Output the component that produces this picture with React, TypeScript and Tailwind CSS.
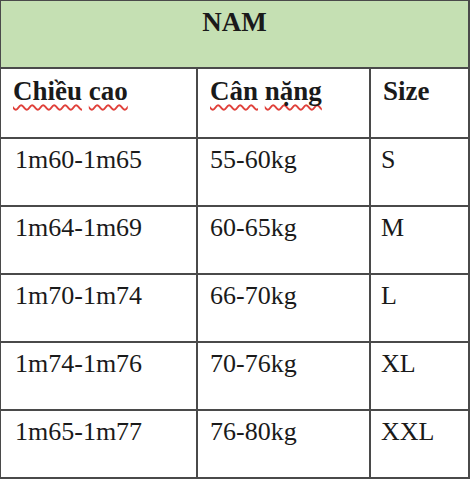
const rows = [
  ['1m60-1m65', '55-60kg', 'S'],
  ['1m64-1m69', '60-65kg', 'M'],
  ['1m70-1m74', '66-70kg', 'L'],
  ['1m74-1m76', '70-76kg', 'XL'],
  ['1m65-1m77', '76-80kg', 'XXL'],
];

const serif = { fontFamily: '"Liberation Serif", "Times New Roman", serif' };

// Word's spell-check squiggle under each flagged word
function Squiggle({ children }: { children: string }) {
  return (
    <span className="underline decoration-wavy decoration-[#e0403a] decoration-[1.5px] underline-offset-[4px] [text-decoration-skip-ink:none]">
      {children}
    </span>
  );
}

export default function App() {
  return (
    <div className="h-[480px] w-[471px] overflow-hidden bg-white text-[#1a1a1a]" style={serif}>
      <div className="w-[470px] border-2 border-t-[1px] border-l-[1px] border-[#4a4a4a]">
        {/* Title row */}
        <div className="flex h-[66px] items-start justify-center bg-[#c5e0b3] pt-[1px] text-[27px] font-bold">
          NAM
        </div>

        {/* Column headings */}
        <div className="grid h-[70px] grid-cols-[195px_173px_1fr] border-t-2 border-[#4a4a4a] text-[27px] font-bold">
          <div className="px-[12px] pt-[2px]">
            <Squiggle>Chiều</Squiggle> <Squiggle>cao</Squiggle>
          </div>
          <div className="border-l-2 border-[#4a4a4a] px-[12px] pt-[2px]">
            <Squiggle>Cân</Squiggle> <Squiggle>nặng</Squiggle>
          </div>
          <div className="border-l-2 border-[#4a4a4a] px-[12px] pt-[2px]">Size</div>
        </div>

        {rows.map(([height, weight, size]) => (
          <div
            key={height}
            className="grid h-[68px] grid-cols-[195px_173px_1fr] border-t-2 border-[#4a4a4a] text-[26px]"
          >
            <div className="px-[14px] pt-[1px]">{height}</div>
            <div className="border-l-2 border-[#4a4a4a] px-[12px] pt-[1px]">{weight}</div>
            <div className="border-l-2 border-[#4a4a4a] px-[10px] pt-[1px]">{size}</div>
          </div>
        ))}
      </div>
    </div>
  );
}
